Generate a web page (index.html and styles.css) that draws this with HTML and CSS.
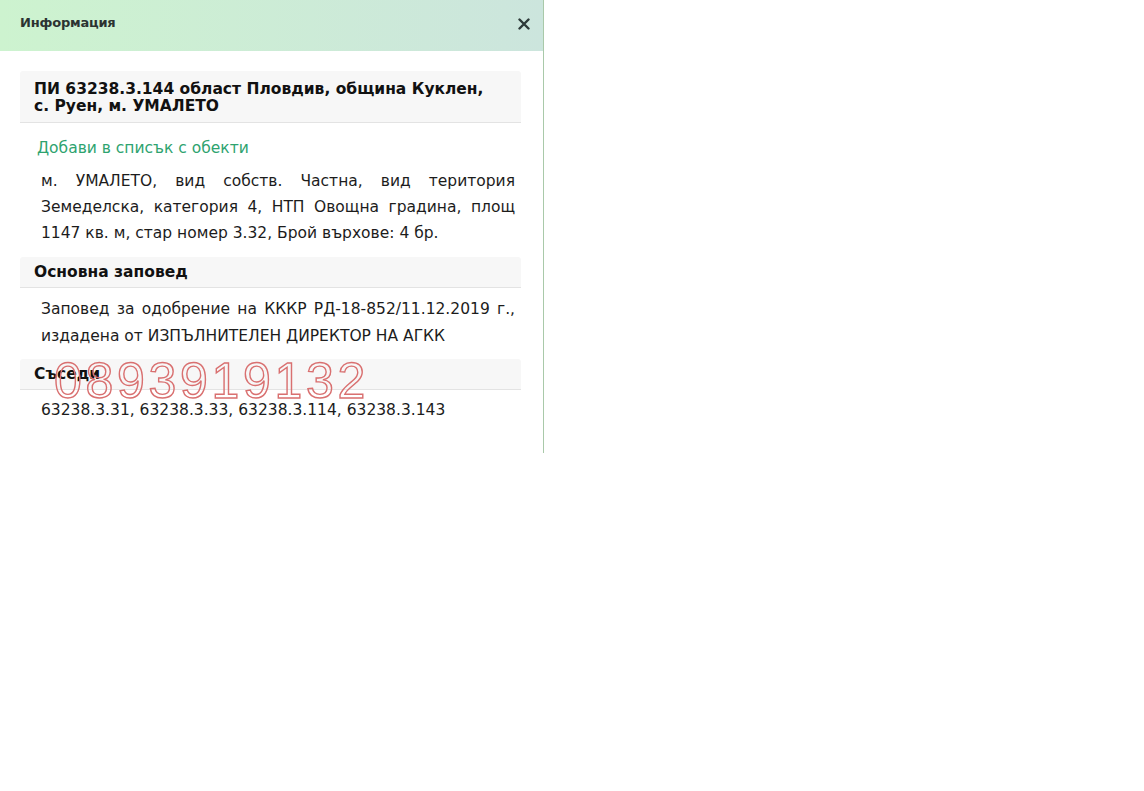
FILE: index.html
```html
<!DOCTYPE html>
<html lang="bg">
<head>
<meta charset="utf-8">
<link rel="stylesheet" href="styles.css">
</head>
<body>
<div class="panel">
  <div class="panel-head">
    <span class="panel-title">Информация</span>
    <span class="close"><svg width="12" height="12" viewBox="0 0 12 12"><path d="M1.5 1.5 L10.5 10.5 M10.5 1.5 L1.5 10.5" stroke="#2e3a3a" stroke-width="2.4" stroke-linecap="round"/></svg></span>
  </div>
  <div class="panel-body">
    <div class="sec-head sec-head-big">ПИ 63238.3.144 област Пловдив, община Куклен, с. Руен, м. УМАЛЕТО</div>
    <div class="link">Добави в списък с обекти</div>
    <p class="text text-first">м. УМАЛЕТО, вид собств. Частна, вид територия Земеделска, категория 4, НТП Овощна градина, площ 1147 кв. м, стар номер 3.32, Брой върхове: 4 бр.</p>
    <div class="sec-head">Основна заповед</div>
    <p class="text text-order">Заповед за одобрение на КККР РД-18-852/11.12.2019 г., издадена от ИЗПЪЛНИТЕЛЕН ДИРЕКТОР НА АГКК</p>
    <div class="sec-head">Съседи</div>
    <p class="text text-nb">63238.3.31, 63238.3.33, 63238.3.114, 63238.3.143</p>
  </div>
  <div class="watermark">0893919132</div>
</div>
</body>
</html>
```

FILE: styles.css
```css
html, body {
  margin: 0;
  padding: 0;
  background: #fff;
}
body {
  font-family: "DejaVu Sans", Verdana, sans-serif;
  color: #1a1a1a;
}
.panel {
  position: relative;
  width: 543px;
  height: 453px;
  border-right: 1px solid #a9c9a9;
  background: #fff;
}
.panel-head {
  height: 51px;
  box-sizing: border-box;
  display: flex;
  align-items: center;
  justify-content: space-between;
  padding: 0 13px 6px 20px;
  background: linear-gradient(to right, #cdf3cf, #cce5dd);
}
.panel-title {
  font-family: "DejaVu Sans", Tahoma, sans-serif;
  font-size: 13px;
  font-weight: bold;
  color: #2c3331;
  letter-spacing: -0.2px;
}
.close {
  display: flex;
  margin-top: 3px;
}
.panel-body {
  padding: 20px 22px 0 20px;
}
.sec-head {
  background: #f7f7f7;
  border-bottom: 1px solid #e3e3e3;
  border-radius: 3px 3px 0 0;
  padding: 7px 14px 6px 14px;
  font-size: 15.5px;
  line-height: 17px;
  font-weight: bold;
  color: #111;
}
.sec-head-big {
  padding: 10px 20px 7px 14px;
}
.link {
  margin: 14px 0 0 17px;
  font-size: 15.5px;
  line-height: 22px;
  color: #2ea36f;
}
.text {
  margin: 0;
  padding: 0 6px 0 21px;
  font-size: 15.5px;
  color: #1c1c1c;
  text-align: justify;
}
.text-first {
  margin-top: 9px;
  margin-bottom: 11px;
  line-height: 26px;
}
.text-order {
  margin-top: 8px;
  margin-bottom: 9px;
  line-height: 27px;
}
.text-nb {
  margin-top: 7px;
  line-height: 26px;
}
.watermark {
  position: absolute;
  left: 54px;
  top: 361px;
  font-family: "Liberation Sans", Arial, sans-serif;
  font-size: 50px;
  letter-spacing: 3.7px;
  line-height: 40px;
  color: transparent;
  -webkit-text-stroke: 1.4px #d97070;
  pointer-events: none;
}
```
